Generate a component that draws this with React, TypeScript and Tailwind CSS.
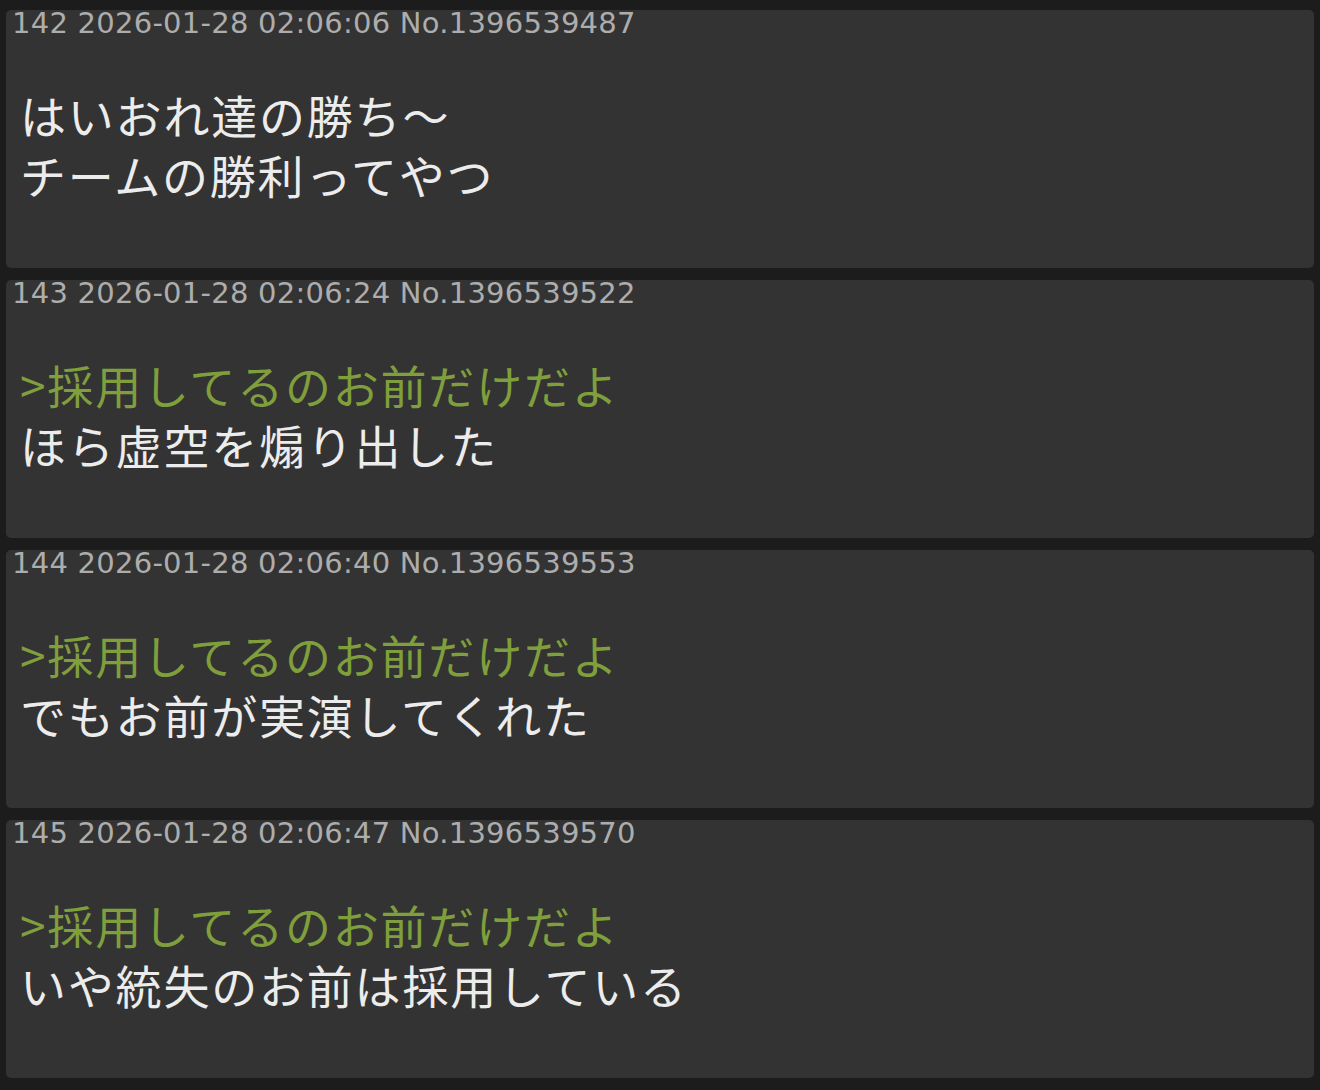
import React from 'react';

interface Post {
  no: number;
  date: string;
  id: string;
  quote?: string;
  lines: string[];
}

const POSTS: Post[] = [
  { no: 142, date: '2026-01-28 02:06:06', id: '1396539487', lines: ['はいおれ達の勝ち〜', 'チームの勝利ってやつ'] },
  { no: 143, date: '2026-01-28 02:06:24', id: '1396539522', quote: '>採用してるのお前だけだよ', lines: ['ほら虚空を煽り出した'] },
  { no: 144, date: '2026-01-28 02:06:40', id: '1396539553', quote: '>採用してるのお前だけだよ', lines: ['でもお前が実演してくれた'] },
  { no: 145, date: '2026-01-28 02:06:47', id: '1396539570', quote: '>採用してるのお前だけだよ', lines: ['いや統失のお前は採用している'] },
];

const PostCard: React.FC<{ post: Post }> = ({ post }) => (
  <div className="h-[258px] rounded-[5px] bg-[#333333]">
    <div className="pl-[6px] text-[29px] leading-[26px] tracking-[0.25px] text-[#adadad] font-['DejaVu_Sans',sans-serif] whitespace-nowrap">
      {post.no} {post.date} No.{post.id}
    </div>
    <div className="mt-[48px] pl-[14px] text-[46px] leading-[60px] tracking-[1.8px] text-[#ececec] font-['Noto_Sans_CJK_JP',sans-serif]">
      {post.quote && <div className="text-[#7f9e3c]">{post.quote}</div>}
      {post.lines.map((line, i) => (
        <div key={i}>{line}</div>
      ))}
    </div>
  </div>
);

export default function App() {
  return (
    <div className="min-h-[1090px] w-[1320px] bg-[#1c1c1c] pt-[10px] pl-[6px] pr-[6px]">
      <div className="flex flex-col gap-[12px]">
        {POSTS.map((p) => (
          <PostCard key={p.no} post={p} />
        ))}
      </div>
    </div>
  );
}
